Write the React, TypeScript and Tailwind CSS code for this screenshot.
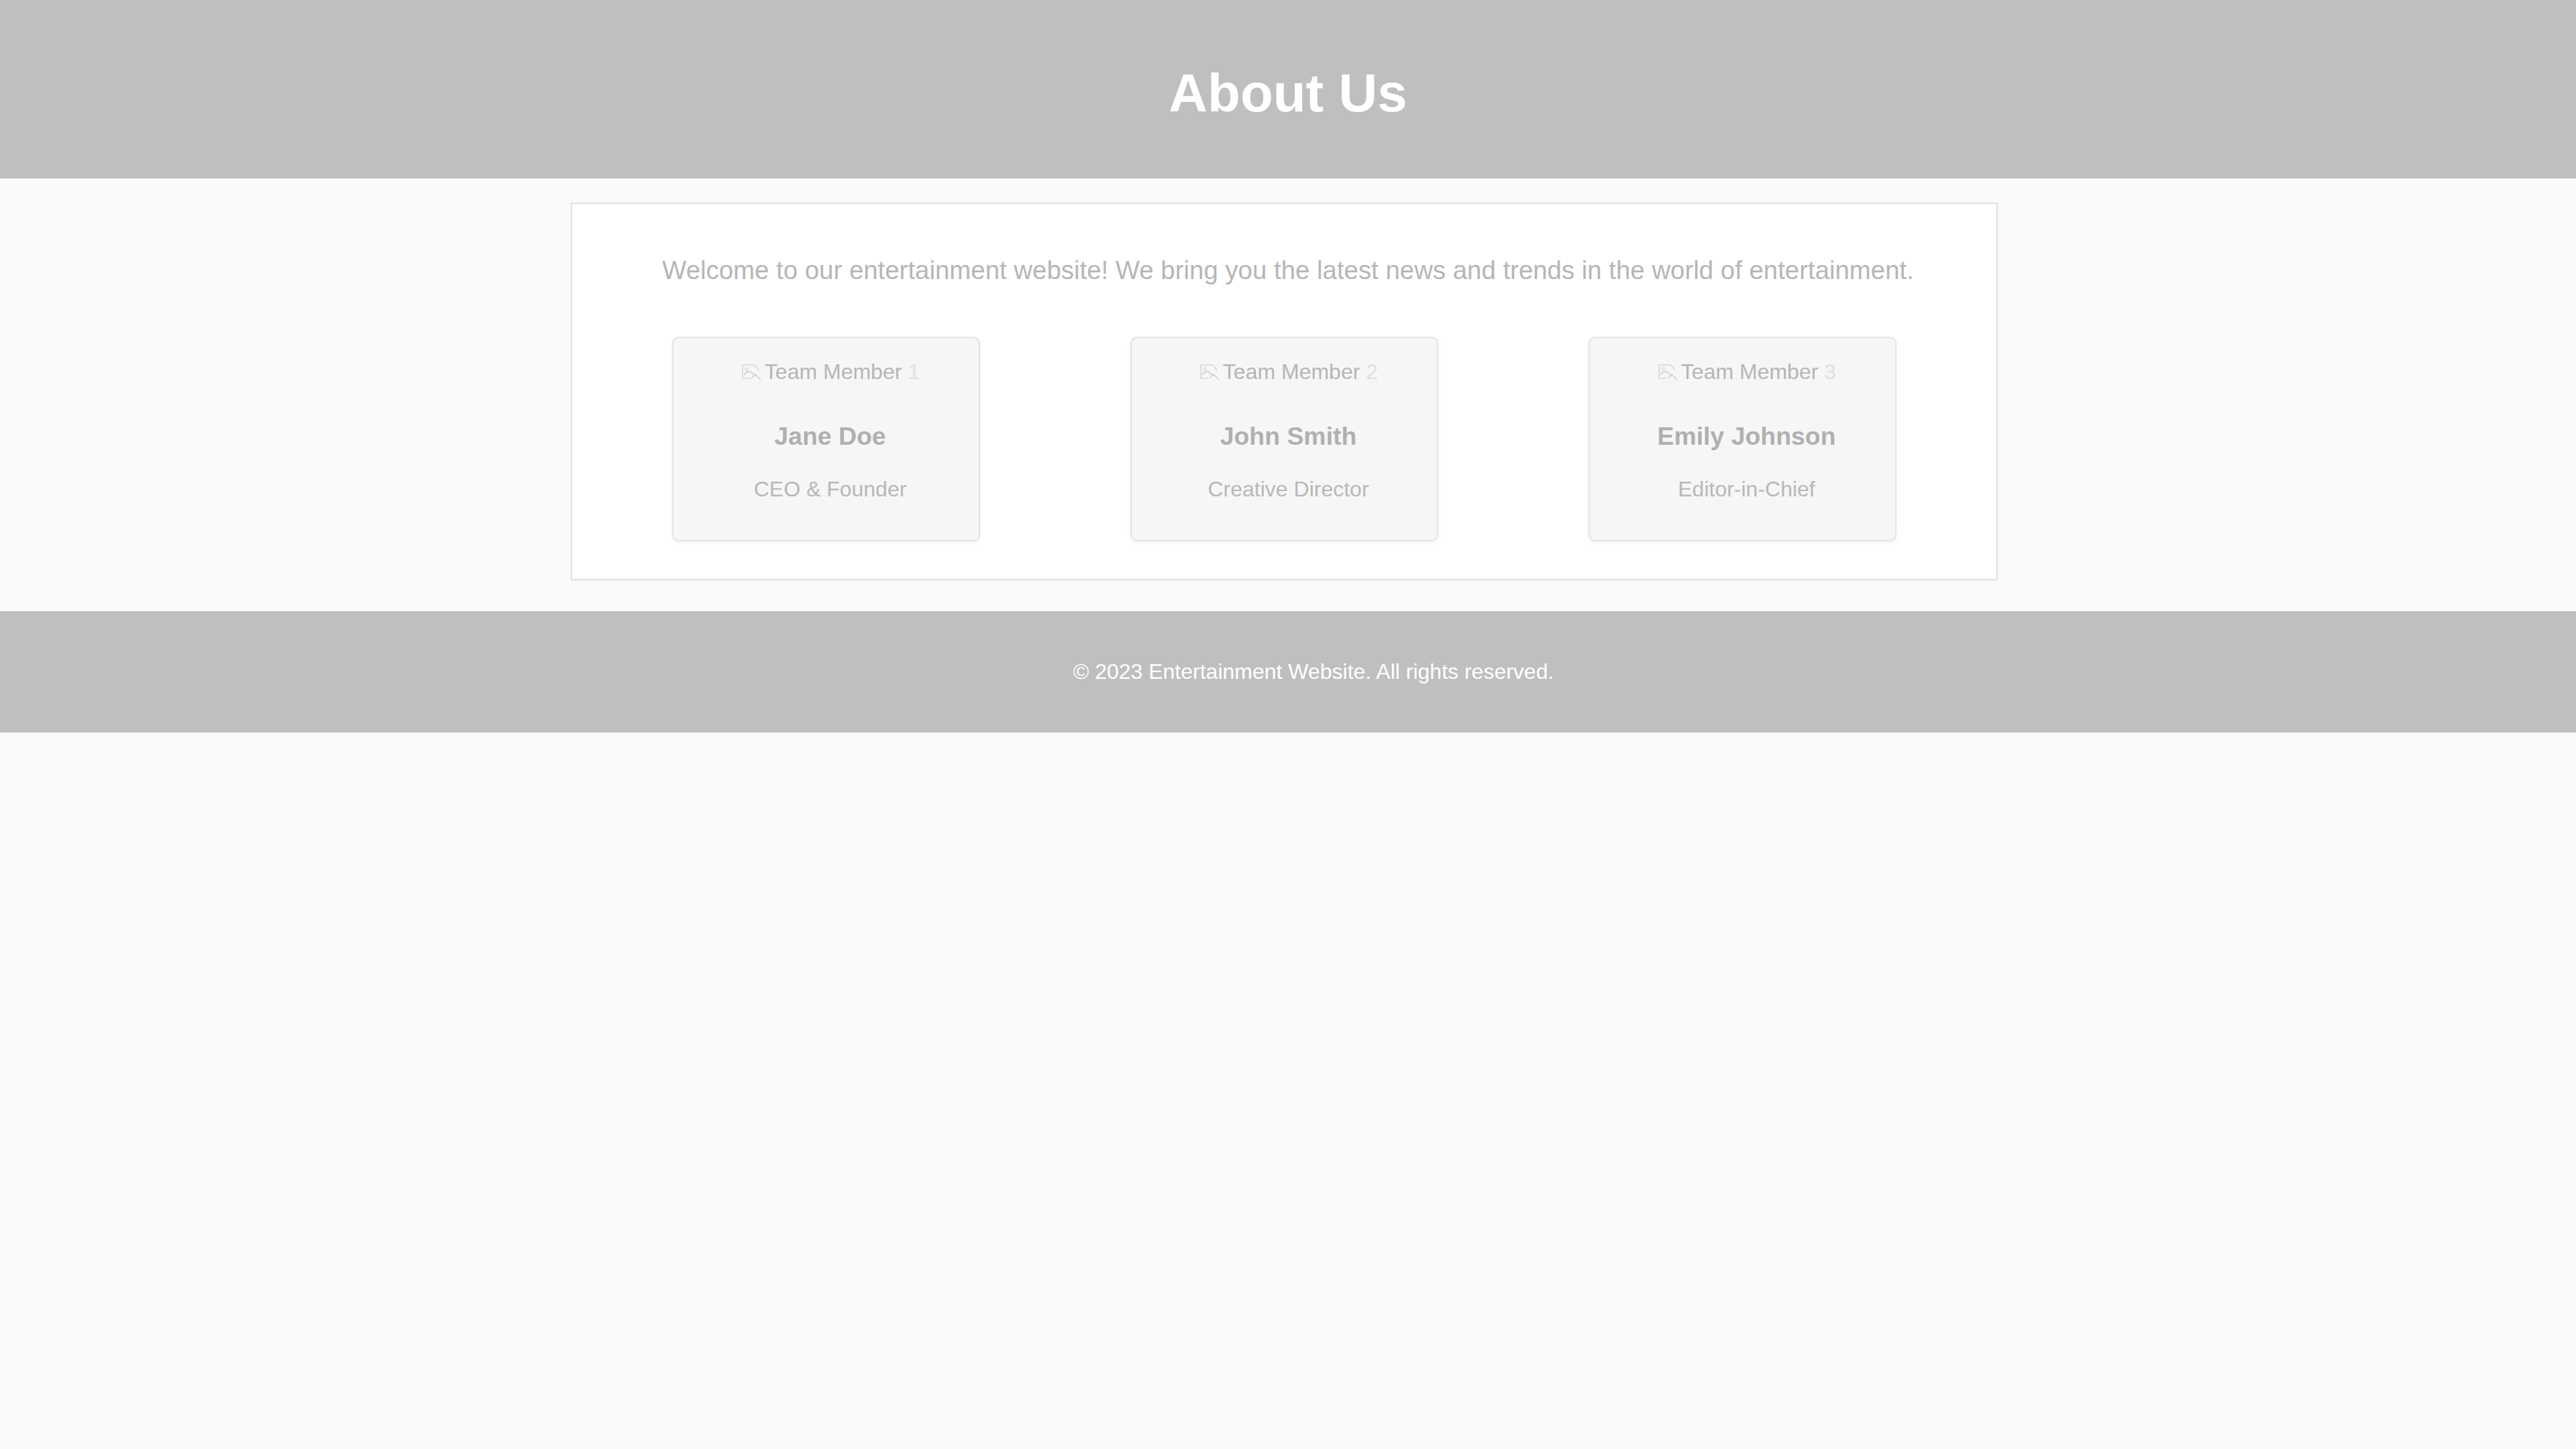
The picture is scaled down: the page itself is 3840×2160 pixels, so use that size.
import React from "react";

function BrokenImageIcon() {
  return (
    <svg width="34" height="28" viewBox="0 0 34 28" className="mr-[2px] shrink-0">
      <path d="M3 4 L20 4 L26 10 L26 13" fill="none" stroke="#d6d6d6" strokeWidth="1.6" />
      <path d="M3 4 L3 24 L14 24" fill="none" stroke="#d6d6d6" strokeWidth="1.6" />
      <path d="M5 19 C9 13 13 12 18 17 L22 21" fill="none" stroke="#cccccc" strokeWidth="1.6" />
      <path d="M16 24 L22 18 L30 26" fill="none" stroke="#d2d2d2" strokeWidth="1.6" />
      <circle cx="9" cy="10" r="2" fill="none" stroke="#d6d6d6" strokeWidth="1.2" />
    </svg>
  );
}

const members = [
  { n: "1", name: "Jane Doe", role: "CEO & Founder" },
  { n: "2", name: "John Smith", role: "Creative Director" },
  { n: "3", name: "Emily Johnson", role: "Editor-in-Chief" },
];

function MemberCard({ n, name, role }: { n: string; name: string; role: string }) {
  return (
    <div className="w-[459px] h-[305px] rounded-[10px] border-2 border-[#e4e4e4] bg-[#f6f6f6] shadow-[0_2px_6px_rgba(0,0,0,0.05)] flex flex-col items-center pt-[32px] pl-[12px]">
      <div className="flex items-center text-[32px] leading-[36.8px] text-[#b5b5b5]">
        <BrokenImageIcon />
        <span>Team Member</span>
        <span className="ml-[9px] text-[#e0e0e0]">{n}</span>
      </div>
      <h3 className="mt-[56px] text-[37.44px] leading-[43px] font-bold text-[#b0b0b0]">{name}</h3>
      <p className="mt-[39px] text-[32px] leading-[36.8px] text-[#b8b8b8]">{role}</p>
    </div>
  );
}

export default function App() {
  return (
    <div
      className="min-h-screen bg-[#fafafa]"
      style={{ fontFamily: '"Liberation Sans", Arial, sans-serif' }}
    >
      <header className="h-[266px] bg-[#bfbfbf] flex items-center justify-center pt-[12px]">
        <h1 className="text-[80px] leading-[92px] font-bold text-white">About Us</h1>
      </header>

      <main className="flex justify-center pr-[11px] pt-[36px]">
        <section className="w-[2127px] border-2 border-[#e2e2e2] bg-white px-[37px] pt-[77px] pb-[56px] shadow-[0_1px_3px_rgba(0,0,0,0.04)]">
          <p className="text-center pl-[11px] text-[38.4px] leading-[44px] text-[#b6b6b6]">
            Welcome to our entertainment website! We bring you the latest news and trends in the world of entertainment.
          </p>
          <div className="mt-[77px] flex justify-around">
            {members.map((m) => (
              <MemberCard key={m.n} {...m} />
            ))}
          </div>
        </section>
      </main>

      <footer className="mt-[46px] h-[181px] bg-[#bfbfbf] flex items-center justify-center pl-[76px]">
        <p className="text-[32px] leading-[36.8px] text-white">© 2023 Entertainment Website. All rights reserved.</p>
      </footer>
    </div>
  );
}
